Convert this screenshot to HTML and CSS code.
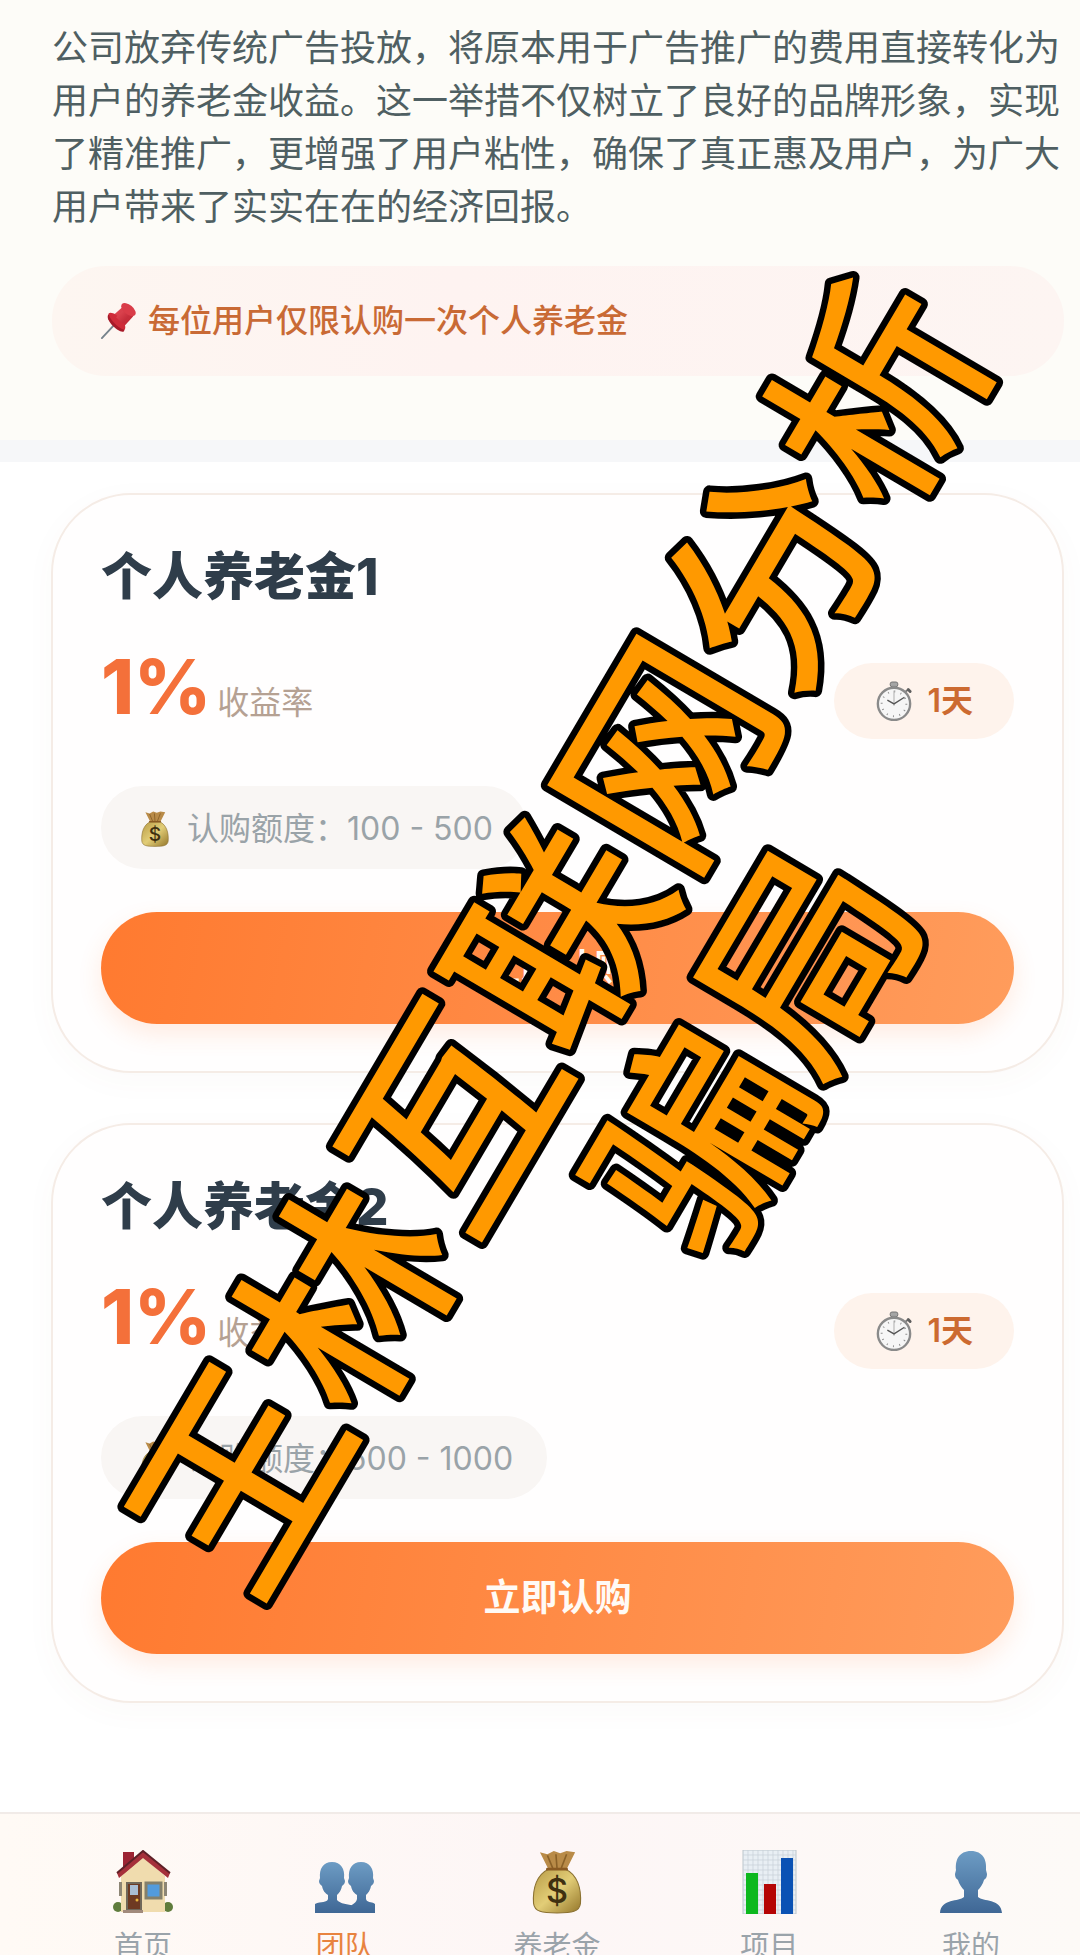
FILE: index.html
```html
<!DOCTYPE html>
<html lang="zh-CN">

<head>
    <meta charset="UTF-8">
    <title>个人养老金</title>
    <meta name="viewport" content="width=device-width, initial-scale=1.0">
    <link rel="stylesheet" href="styles.css">
</head>

<body>

    <!-- Shared icons -->
    <svg class="icon-defs" width="0" height="0" aria-hidden="true">
        <defs>
            <linearGradient id="bagFill" x1="0" y1="0" x2="1" y2="1">
                <stop offset="0" stop-color="#b79a45" />
                <stop offset="0.5" stop-color="#e2cd77" />
                <stop offset="1" stop-color="#94762a" />
            </linearGradient>
            <linearGradient id="personFill" x1="0" y1="0" x2="0" y2="1">
                <stop offset="0" stop-color="#6d9cc4" />
                <stop offset="1" stop-color="#3f6795" />
            </linearGradient>
            <linearGradient id="pinFill" x1="0" y1="0" x2="1" y2="1">
                <stop offset="0" stop-color="#e8505a" />
                <stop offset="1" stop-color="#b51c2b" />
            </linearGradient>
        </defs>
        <symbol id="bag" viewBox="0 0 48 60">
            <path d="M8 2 L15 4 L21 1 L27 3 L33 1 L41 2 L33 18 L16 18 Z" fill="#b98b48" />
            <path d="M15 5 L20 17 M23 4 L24 17 M33 4 L28 17" stroke="#8a6128" stroke-width="1.5" fill="none" />
            <path d="M16 18 C5 23 1 36 2 50 C3 58 10 59 24 59 C38 59 45 58 46 50 C47 36 43 23 32 18 Z" fill="url(#bagFill)" stroke="#8b7130" />
            <path d="M15 18 H33" stroke="#8a5a22" stroke-width="2.5" stroke-linecap="round" />
            <text x="24" y="50" text-anchor="middle" class="bag-sign">$</text>
        </symbol>
        <symbol id="stopwatch" viewBox="0 0 40 42">
            <rect x="16" y="1" width="8" height="5" rx="2" fill="#a5a5a5" stroke="#707070" />
            <rect x="18" y="5" width="4" height="4" fill="#8d8d8d" />
            <path d="M31 12 L35 9" stroke="#777" stroke-width="2" />
            <path d="M35 9 L37 11" stroke="#5e5e5e" stroke-width="3" stroke-linecap="round" />
            <circle cx="20" cy="24" r="17" fill="#f6f6f6" stroke="#8a8a8a" stroke-width="2.5" />
            <circle cx="20" cy="24" r="13" fill="none" stroke="#8f8f8f" stroke-width="2" stroke-dasharray="1 5.8" />
            <path d="M20 26 V10" stroke="#aaa" />
            <path d="M13 20 L20 24 L31 17" stroke="#555" stroke-width="1.4" fill="none" />
        </symbol>
    </svg>

    <section class="intro">
        <p class="intro-text">公司放弃传统广告投放，将原本用于广告推广的费用直接转化为用户的养老金收益。这一举措不仅树立了良好的品牌形象，实现了精准推广，更增强了用户粘性，确保了真正惠及用户，为广大用户带来了实实在在的经济回报。</p>
        <div class="notice">
            <svg class="pin" viewBox="0 0 40 40" aria-hidden="true">
                <path d="M15 24 L2 38" stroke="#77838c" stroke-width="2" stroke-linecap="round" />
                <path d="M9 13 C14 9 30 24 25 31 C21 34 4 19 9 13 Z" fill="#a81a29" />
                <path d="M14 14 L24 5 L35 15 L25 26 Z" fill="url(#pinFill)" />
                <path d="M9 12 C14 8 30 23 26 29 C21 29 10 19 9 12 Z" fill="#cf2b39" />
                <path d="M17 16 L25 8 L32 14 L24 23 Z" fill="url(#pinFill)" />
                <ellipse cx="30" cy="8" rx="9" ry="5" transform="rotate(40 30 8)" fill="#d93c48" />
            </svg>
            <span>每位用户仅限认购一次个人养老金</span>
        </div>
    </section>

    <main class="plans">
        <article class="card">
            <h2>个人养老金1</h2>
            <div class="rate-row">
                <p class="rate"><strong>1%</strong><span>收益率</span></p>
                <div class="days">
                    <svg class="watch" aria-hidden="true"><use href="#stopwatch" /></svg>
                    <span>1天</span>
                </div>
            </div>
            <div class="quota">
                <svg class="bag-small" aria-hidden="true"><use href="#bag" /></svg>
                <span>认购额度：100 - 500</span>
            </div>
            <button type="button" class="buy">立即认购</button>
        </article>

        <article class="card">
            <h2>个人养老金2</h2>
            <div class="rate-row">
                <p class="rate"><strong>1%</strong><span>收益率</span></p>
                <div class="days">
                    <svg class="watch" aria-hidden="true"><use href="#stopwatch" /></svg>
                    <span>1天</span>
                </div>
            </div>
            <div class="quota">
                <svg class="bag-small" aria-hidden="true"><use href="#bag" /></svg>
                <span>认购额度：500 - 1000</span>
            </div>
            <button type="button" class="buy">立即认购</button>
        </article>
    </main>

    <!-- Bottom navigation -->
    <nav class="tabbar">
        <a href="#home" class="tab">
            <svg viewBox="0 0 62 64" aria-hidden="true">
                <circle cx="6" cy="57" r="5" fill="#5f7c3c" />
                <circle cx="56" cy="57" r="5" fill="#5f7c3c" />
                <rect x="11" y="2" width="11" height="24" fill="#9c2433" />
                <path d="M9 26 L31 7 L53 26 V62 H9 Z" fill="#f0dcae" />
                <path d="M5 23 L31 1 L58 23 L56 28 L31 8 L7 28 Z" fill="#a5303a" />
                <path d="M5 23 L31 1 L58 23" stroke="#5e2027" stroke-width="2" fill="none" />
                <rect x="7" y="32" width="3" height="14" fill="#8d8675" />
                <rect x="52" y="32" width="3" height="14" fill="#8d8675" />
                <rect x="15" y="33" width="14" height="27" fill="#6e3a22" stroke="#70685a" stroke-width="2" />
                <rect x="18" y="35" width="8" height="10" fill="#a9bdd3" />
                <circle cx="25" cy="50" r="1.5" fill="#e9b83f" />
                <rect x="34" y="33" width="15" height="15" fill="#529bdc" stroke="#84806b" stroke-width="3" />
                <rect x="11" y="60" width="20" height="3" fill="#a18a7c" />
            </svg>
            <span>首页</span>
        </a>
        <a href="#team" class="tab active">
            <svg viewBox="0 0 62 64" aria-hidden="true">
                <g fill="url(#personFill)">
                    <path d="M18 12 C27 12 31 19 30 28 L31 31 C31 34 29 35 28 36 C27 41 25 43 23 45 V50 C26 54 34 54 40 56 V63 H1 V54 C7 51 13 53 14 49 V45 C11 43 9 41 8 36 C7 35 5 34 5 31 L6 28 C5 19 9 12 18 12 Z" />
                    <path d="M47 12 C56 12 60 19 59 28 L60 31 C60 34 58 35 57 36 C56 41 54 43 52 45 V49 C53 53 57 51 61 54 V63 H32 C34 54 42 55 43 49 V45 C40 43 38 41 37 36 C36 35 34 34 34 31 L35 28 C34 19 38 12 47 12 Z" />
                </g>
            </svg>
            <span>团队</span>
        </a>
        <a href="#pension" class="tab">
            <svg aria-hidden="true"><use href="#bag" /></svg>
            <span>养老金</span>
        </a>
        <a href="#projects" class="tab">
            <svg viewBox="0 0 62 64" aria-hidden="true">
                <rect x="5" y="0" width="53" height="64" fill="#e9eff4" stroke="#bcc5cc" />
                <path d="M10 0 V64 M15 0 V64 M20 0 V64 M25 0 V64 M30 0 V64 M35 0 V64 M40 0 V64 M45 0 V64 M50 0 V64 M55 0 V64 M5 5 H58 M5 10 H58 M5 15 H58 M5 20 H58 M5 25 H58 M5 30 H58 M5 35 H58 M5 40 H58 M5 45 H58 M5 50 H58 M5 55 H58 M5 60 H58" stroke="#c7d0d7" stroke-width="0.7" />
                <rect x="8" y="23" width="12" height="41" fill="#0db81e" />
                <rect x="26" y="34" width="12" height="30" fill="#b50505" />
                <rect x="43" y="8" width="12" height="56" fill="#0b52b4" />
            </svg>
            <span>项目</span>
        </a>
        <a href="#mine" class="tab">
            <svg viewBox="0 0 62 64" aria-hidden="true">
                <path d="M31 1 C43 1 47 10 46 20 L47 24 C47 28 45 29 44 30 C43 34 40 38 38 40 V47 C43 52 61 48 62 63 H0 C1 48 19 52 24 47 V40 C22 38 19 34 18 30 C17 29 15 28 15 24 L16 20 C15 10 19 1 31 1 Z" fill="url(#personFill)" />
            </svg>
            <span>我的</span>
        </a>
    </nav>

    <!-- Diagonal stamp over the page -->
    <svg class="stamp" viewBox="0 0 1080 1955">
        <g transform="translate(560 935) rotate(-59.5)">
            <text x="0" y="78" text-anchor="middle">王林互联网分析</text>
            <text x="0" y="303" text-anchor="middle">骗局</text>
        </g>
    </svg>

</body>

</html>
```
FILE: styles.css
```css
* {
    box-sizing: border-box;
}

body {
    margin: 0;
    height: 100vh;
    overflow: hidden;
    position: relative;
    display: flex;
    flex-direction: column;
    font-family: Inter, 'Noto Sans CJK SC', sans-serif;
    font-size: 32px;
    background-color: #fff;
}

h2,
p {
    margin: 0;
}

.icon-defs {
    position: absolute;
}

.intro {
    padding: 22px 16px 64px 52px;
    background-color: #fdfcf8;
    border-bottom: 22px solid #f6f7f9;
}

.intro-text {
    font-size: 36px;
    line-height: 53px;
    color: #4f5f62;
}

.notice {
    display: flex;
    align-items: center;
    gap: 10px;
    margin-top: 32px;
    padding: 30px 48px;
    border-radius: 54px;
    line-height: 50px;
    font-weight: 500;
    color: #c96a35;
    background: linear-gradient(90deg, #fdf6f1, #fef3f1 40%, #fdf5f2);
}

.pin {
    width: 38px;
    height: 38px;
}

.plans {
    display: flex;
    flex-direction: column;
    gap: 50px;
    padding: 31px 16px 0 51px;
}

.card {
    padding: 50px 48px 47px;
    border: 2px solid #f5ece6;
    border-radius: 80px;
    background-color: #fffefe;
    box-shadow: 0 8px 32px rgba(120, 90, 70, 0.03);
}

.card h2 {
    font-size: 51px;
    line-height: 64px;
    font-weight: 800;
    color: #2f3d4a;
}

.rate-row {
    display: flex;
    justify-content: space-between;
    align-items: center;
    margin-top: 28px;
}

.rate {
    display: flex;
    align-items: baseline;
    gap: 6px;
    line-height: 100px;
    color: #b5a193;
}

.rate strong {
    font-size: 75px;
    font-weight: 800;
    color: #f4703a;
}

.days {
    display: flex;
    align-items: center;
    gap: 14px;
    margin-top: 12px;
    padding: 14px 41px;
    border-radius: 38px;
    line-height: 48px;
    font-weight: 600;
    color: #cc6a30;
    background-color: #fef3ec;
}

.watch {
    width: 38px;
    height: 40px;
}

.quota {
    display: flex;
    align-items: center;
    gap: 16px;
    width: fit-content;
    margin-top: 33px;
    padding: 19px 34px 16px 38px;
    border-radius: 42px;
    line-height: 48px;
    color: #9aa3a8;
    background-color: #f9f6f4;
}

.bag-small {
    width: 32px;
    height: 36px;
}

.buy {
    display: block;
    width: 100%;
    margin-top: 43px;
    padding: 28px;
    border: none;
    border-radius: 56px;
    font-family: inherit;
    font-size: 37px;
    line-height: 56px;
    font-weight: 600;
    color: #fffaf5;
    background: linear-gradient(100deg, #ff7a30, #ff9c5c);
    box-shadow: 0 10px 24px rgba(255, 122, 48, 0.14);
    cursor: pointer;
}

.tabbar {
    display: flex;
    justify-content: space-between;
    flex: 1 0 auto;
    margin-top: 109px;
    padding: 36px 76px 0 110px;
    border-top: 2px solid #f1ebe8;
    background: linear-gradient(90deg, #fffaf5, #fdf6f6 50%, #fdfaf7);
}

.tab {
    display: flex;
    flex-direction: column;
    align-items: center;
    gap: 12px;
    min-width: 66px;
    font-size: 29px;
    line-height: 42px;
    color: #9aa3aa;
    text-decoration: none;
}

.tab.active {
    color: #e8833f;
}

.tab svg {
    width: 62px;
    height: 64px;
}

.bag-sign {
    font-family: Inter, sans-serif;
    font-size: 32px;
    font-weight: 500;
    fill: #3f3010;
}

.stamp {
    position: absolute;
    top: 0;
    left: 0;
    width: 100%;
    pointer-events: none;
}

.stamp text {
    font-family: 'Noto Sans CJK SC', sans-serif;
    font-size: 210px;
    font-weight: 500;
    fill: #ff9900;
    stroke: #000;
    stroke-width: 13px;
    stroke-linejoin: round;
    paint-order: stroke;
}
```
